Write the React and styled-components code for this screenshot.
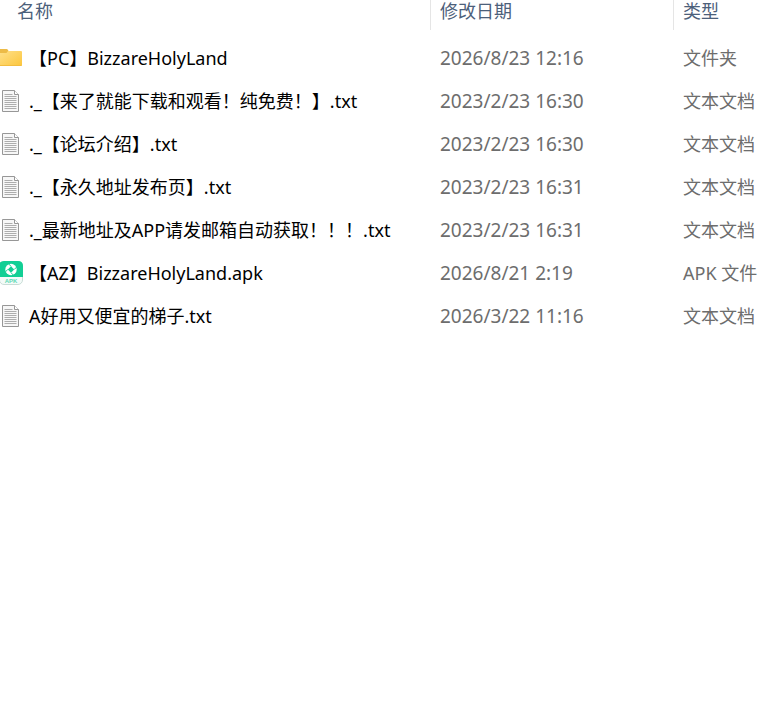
import styled, { createGlobalStyle } from 'styled-components';

const textColor = '#000000';
const mutedColor = '#6d6d6d';
const headerColor = '#4c607a';
const borderColor = '#e5e5e5';

const GlobalStyle = createGlobalStyle`
    body {
        margin: 0;
        background: #ffffff;
        font-family: 'Noto Sans', 'Noto Sans CJK SC', sans-serif;
        font-size: 18px;
        line-height: 22px;
        overflow-x: hidden;
    }
`;

const Table = styled.table`
    width: 100%;
    table-layout: fixed;
    border-collapse: separate;
    border-spacing: 0;
`;

const HeaderCell = styled.th`
    box-sizing: border-box;
    width: ${({ $width }) => $width};
    height: 30px;
    padding: 0 0 8px ${({ $indent }) => $indent ?? '9px'};
    border-right: ${({ $divider }) => ($divider ? `1px solid ${borderColor}` : 'none')};
    color: ${headerColor};
    font-weight: 400;
    text-align: left;
`;

const Body = styled.tbody`
    &::before {
        content: '';
        display: block;
        height: 6px;
    }
`;

const Cell = styled.td`
    height: 43px;
    padding: 0 0 0 9px;
    color: ${mutedColor};
    white-space: nowrap;
`;

const DateCell = styled(Cell)`
    font-size: 19px;
`;

const NameCell = styled(Cell)`
    padding: 0;
    color: ${textColor};
`;

const FileName = styled.div`
    display: flex;
    align-items: center;
    gap: 6px;
`;

const Icon = styled.svg`
    flex: none;
    width: 23px;
    height: 24px;
`;

const FolderIcon = () => (
    <Icon viewBox='0 0 23 24' aria-hidden='true'>
        <defs>
            <linearGradient id='folder' x1='0' y1='0' x2='1' y2='1'>
                <stop offset='0' stopColor='#ffe08a' />
                <stop offset='1' stopColor='#fcc63c' />
            </linearGradient>
        </defs>
        <path d='M0 3h6.5q1 0 1.5 1l1 2v3H0z' fill='#edbb47' />
        <path d='M0 7h6.5L8 5h13q1 0 1 1v13q0 1-1 1H0z' fill='url(#folder)' />
        <path d='M0 19.5h21.5' stroke='#f3bd40' />
    </Icon>
);

const TextIcon = () => (
    <Icon viewBox='0 0 23 24' aria-hidden='true'>
        <path d='M2.5 1.5h12l4 4v17h-16z' fill='#f7f7f7' stroke='#979797' />
        <path d='M14.5 1.5v4h4' fill='#ffffff' stroke='#979797' />
        <path
            d='M4.5 5.5h8M4.5 7.5h12M4.5 9.5h12M4.5 11.5h12M4.5 13.5h12M4.5 15.5h12M4.5 17.5h12M4.5 19.5h12'
            stroke='#adadad'
        />
    </Icon>
);

const ApkIcon = () => (
    <Icon viewBox='0 0 23 24' aria-hidden='true'>
        <rect x='-0.5' y='0.5' width='23' height='23' rx='4.5' fill='#f4fbf9' stroke='#c9dcd6' />
        <path d='M-1 5q0-5 5-5h14q5 0 5 5v11H-1z' fill='#12cf95' />
        <circle cx='11' cy='8.5' r='5.7' fill='#ffffff' />
        <path d='M11 5.3l3.2 3.2-3.2 3.2-3.2-3.2z' fill='#12cf95' />
        <path d='M11 5.3L8.4 2.7M14.2 8.5l2.6-2.6M11 11.7l2.6 2.6M7.8 8.5l-2.6 2.6' stroke='#12cf95' />
        <text
            x='11'
            y='22'
            textAnchor='middle'
            fontFamily='Liberation Sans, sans-serif'
            fontSize='6'
            fontWeight='700'
            fill='#5fd9b5'
        >
            APK
        </text>
    </Icon>
);

const icons = {
    folder: FolderIcon,
    text: TextIcon,
    apk: ApkIcon
};

const files = [
    { name: '【PC】BizzareHolyLand', date: '2026/8/23 12:16', type: '文件夹', icon: 'folder' },
    { name: '._【来了就能下载和观看！纯免费！】.txt', date: '2023/2/23 16:30', type: '文本文档', icon: 'text' },
    { name: '._【论坛介绍】.txt', date: '2023/2/23 16:30', type: '文本文档', icon: 'text' },
    { name: '._【永久地址发布页】.txt', date: '2023/2/23 16:31', type: '文本文档', icon: 'text' },
    { name: '._最新地址及APP请发邮箱自动获取！！！.txt', date: '2023/2/23 16:31', type: '文本文档', icon: 'text' },
    { name: '【AZ】BizzareHolyLand.apk', date: '2026/8/21 2:19', type: 'APK 文件', icon: 'apk' },
    { name: 'A好用又便宜的梯子.txt', date: '2026/3/22 11:16', type: '文本文档', icon: 'text' }
];

function FileRow({ file }) {
    const FileIcon = icons[file.icon];

    return (
        <tr>
            <NameCell>
                <FileName>
                    <FileIcon />
                    <span>{file.name}</span>
                </FileName>
            </NameCell>
            <DateCell>{file.date}</DateCell>
            <Cell>{file.type}</Cell>
        </tr>
    );
}

function App() {
    return (
        <>
            <GlobalStyle />
            <Table lang='zh-CN'>
                <thead>
                    <tr>
                        <HeaderCell scope='col' $width='431px' $indent='17px' $divider>名称</HeaderCell>
                        <HeaderCell scope='col' $width='243px' $divider>修改日期</HeaderCell>
                        <HeaderCell scope='col'>类型</HeaderCell>
                    </tr>
                </thead>
                <Body>
                    {files.map((file) => (
                        <FileRow key={file.name} file={file} />
                    ))}
                </Body>
            </Table>
        </>
    );
}

export default App;
